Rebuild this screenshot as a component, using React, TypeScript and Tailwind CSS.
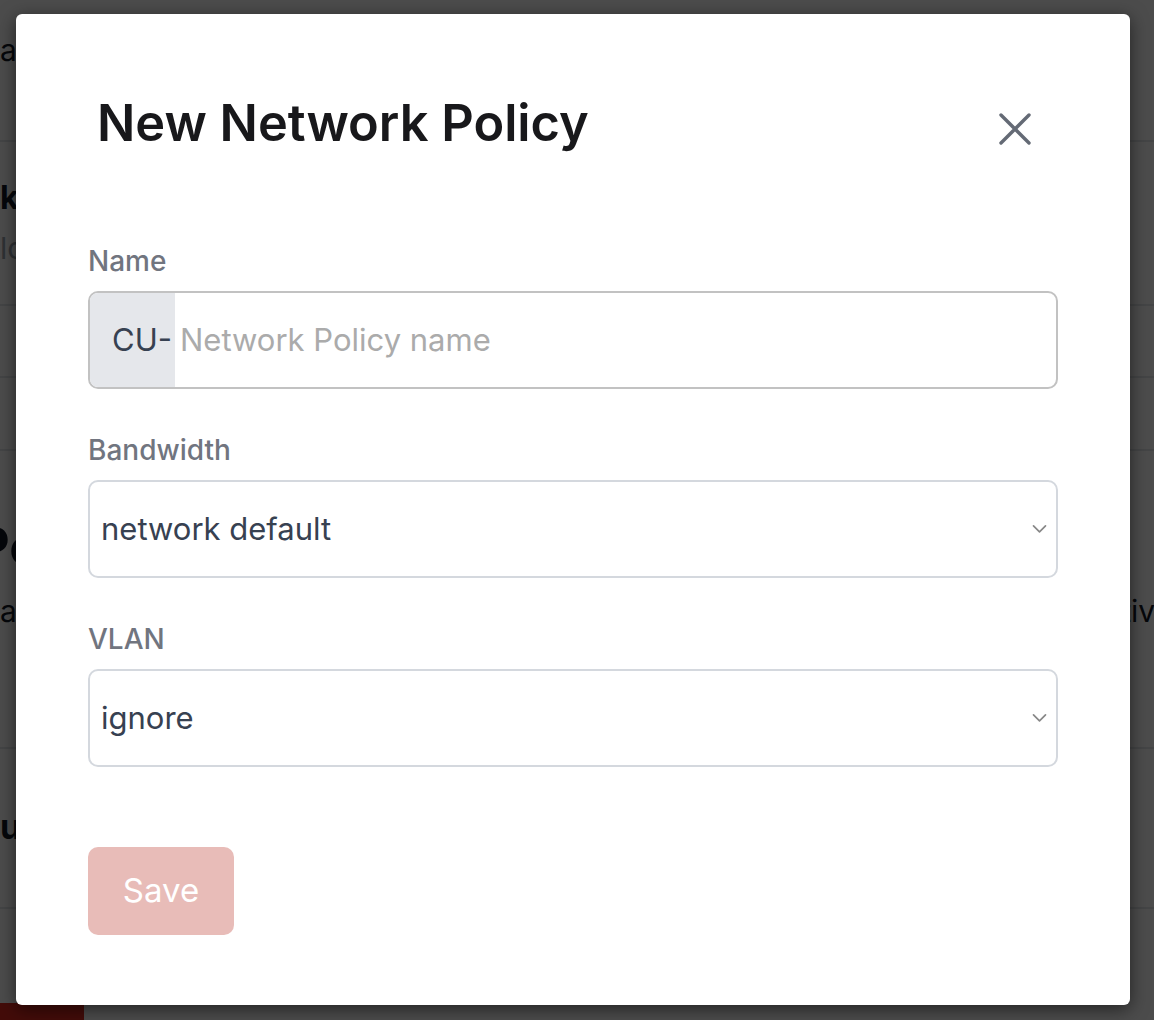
import React from "react";

function Chevron() {
  return (
    <svg width="15" height="10" viewBox="0 0 15 10" fill="none" className="shrink-0">
      <path d="M1.5 1.8L7.5 7.8L13.5 1.8" stroke="#888888" strokeWidth="1.7" strokeLinecap="round" strokeLinejoin="round" />
    </svg>
  );
}

function SelectBox({ value }: { value: string }) {
  return (
    <div className="h-[98px] w-full rounded-[10px] border-2 border-[#d4d8de] flex items-center justify-between pl-[11px] pr-[9px]">
      <span className="text-[31px] text-[#374151]">{value}</span>
      <Chevron />
    </div>
  );
}

export default function App() {
  return (
    <div className="relative w-[1154px] h-[1020px] overflow-hidden bg-white" style={{ fontFamily: "Inter, 'Noto Sans', sans-serif" }}>
      {/* underlying page */}
      <div className="flex flex-col w-full">
        <div className="h-[142px] border-b-2 border-[#e5e7eb] flex items-center">
          <span className="text-[30px] text-[#111827] -mt-[40px]">atlas</span>
        </div>
        <div className="h-[164px] border-b-2 border-[#e5e7eb] flex flex-col justify-center gap-[10px]">
          <span className="text-[32px] font-bold text-[#111827] leading-[40px]">kite</span>
          <span className="text-[30px] text-[#9ca3af] leading-[40px]">lo</span>
        </div>
        <div className="h-[72px] border-b-2 border-[#e5e7eb]" />
        <div className="h-[73px] border-b-2 border-[#e5e7eb]" />
        <div className="h-[298px] border-b-2 border-[#e5e7eb] flex flex-col pt-[68px]">
          <div className="flex justify-between">
            <span className="text-[52px] font-bold text-[#111827] leading-[56px] -ml-[24px]">Pe</span>
          </div>
          <div className="flex justify-between mt-[14px]">
            <span className="text-[30px] text-[#111827]">al</span>
            <span className="text-[30px] text-[#111827] -mr-[18px]">Active</span>
          </div>
        </div>
        <div className="h-[160px] border-b-2 border-[#e5e7eb] flex items-center">
          <span className="text-[34px] font-bold text-[#111827] -mt-[4px]">us</span>
        </div>
        <div className="h-[112px] flex items-end">
          <div className="w-[84px] h-[18px] bg-[#e02a1f]" />
        </div>
      </div>

      {/* overlay */}
      <div className="absolute inset-0 bg-black/[0.70]" />

      {/* modal */}
      <div className="absolute inset-0 pl-[16px] pt-[14px]">
        <div className="w-[1114px] h-[991px] bg-white rounded-[6px] shadow-[0_4px_18px_rgba(0,0,0,0.55)] px-[72px] pt-[79px]">
          <div className="flex items-start justify-between">
            <h1 className="ml-[9px] text-[50.5px] leading-[60px] font-semibold text-[#18181b]">
              New Network Policy
            </h1>
            <button className="mt-[20px] mr-[27px] w-[32px] h-[32px] flex items-center justify-center">
              <svg width="32" height="32" viewBox="0 0 32 32" fill="none">
                <path d="M2 2L30 30M30 2L2 30" stroke="#646a75" strokeWidth="3.4" strokeLinecap="round" />
              </svg>
            </button>
          </div>

          <div className="mt-[92px]">
            <label className="block text-[28px] leading-[32px] font-medium text-[#71757f] mb-[14px]">Name</label>
            <div className="h-[98px] w-full rounded-[10px] border-2 border-[#c2c2c2] flex overflow-hidden">
              <div className="w-[85px] bg-[#e5e7eb] flex items-center pl-[22px]">
                <span className="text-[31px] text-[#374151]">CU-</span>
              </div>
              <div className="flex items-center pl-[5px]">
                <span className="text-[31px] text-[#ababab]">Network Policy name</span>
              </div>
            </div>
          </div>

          <div className="mt-[45px]">
            <label className="block text-[28px] leading-[32px] font-medium text-[#71757f] mb-[14px]">Bandwidth</label>
            <SelectBox value="network default" />
          </div>

          <div className="mt-[45px]">
            <label className="block text-[28px] leading-[32px] font-medium text-[#71757f] mb-[14px]">VLAN</label>
            <SelectBox value="ignore" />
          </div>

          <button className="mt-[80px] w-[146px] h-[88px] rounded-[10px] bg-[#e8bcb8] text-white text-[33px] flex items-center justify-center">
            Save
          </button>
        </div>
      </div>
    </div>
  );
}
